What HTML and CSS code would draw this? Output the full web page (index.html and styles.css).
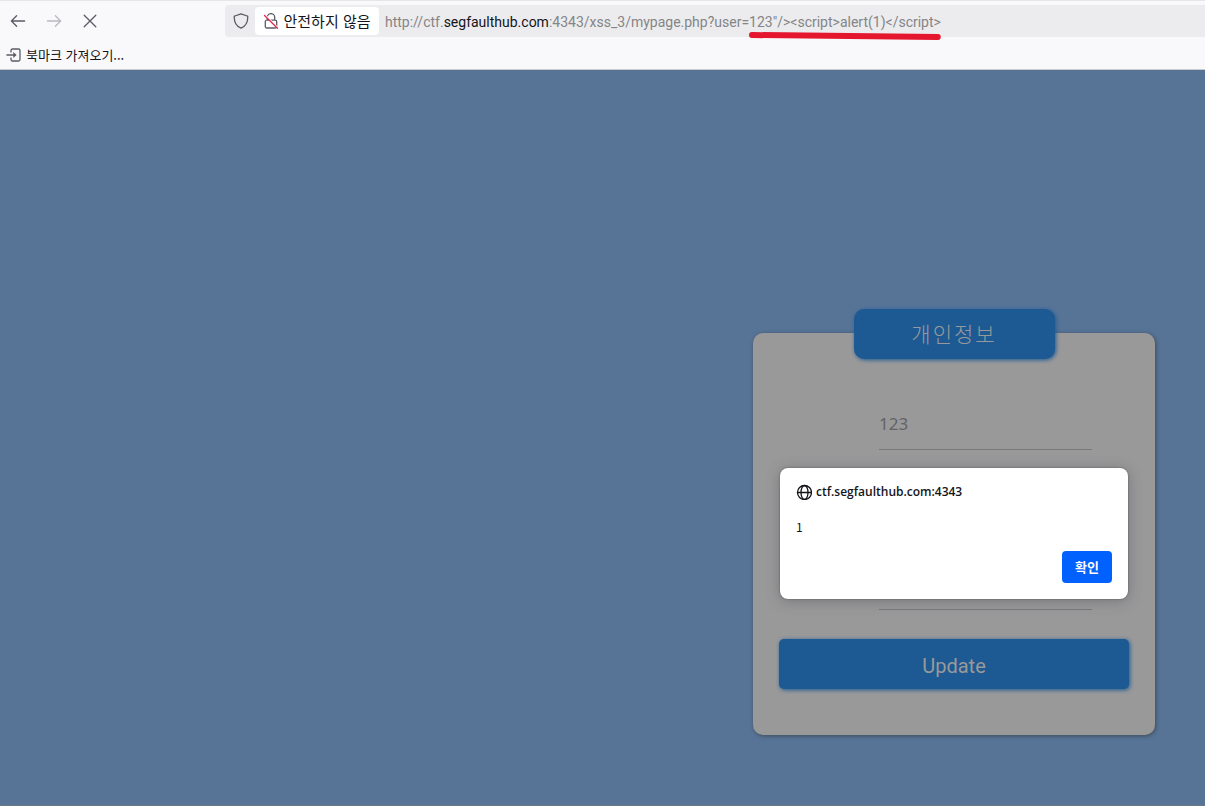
FILE: index.html
```html
<!DOCTYPE html>
<html lang="ko">
<head>
<meta charset="utf-8">
<meta name="viewport" content="width=device-width, initial-scale=1">
<title>개인정보</title>
<link rel="stylesheet" href="styles.css">
</head>
<body>
<header class="browser">
  <div class="toolbar">
    <nav class="nav-buttons">
      <button class="icon-button" type="button" aria-label="뒤로">
        <svg width="16" height="16" viewBox="0 0 16 16"><path d="M14.600 8H1.400M6.600 2.800 1.400 8l5.200 5.200"/></svg>
      </button>
      <button class="icon-button is-disabled" type="button" aria-label="앞으로" disabled>
        <svg width="16" height="16" viewBox="0 0 16 16"><path d="M1.400 8h13.200M9.400 2.800 14.600 8l-5.200 5.200"/></svg>
      </button>
      <button class="icon-button" type="button" aria-label="중지">
        <svg width="16" height="16" viewBox="0 0 16 16"><path d="m2.200 2.200 11.600 11.600M13.800 2.200 2.200 13.800"/></svg>
      </button>
    </nav>
    <div class="address-bar">
      <button class="shield-button" type="button" aria-label="보호">
        <svg width="16" height="16" viewBox="0 0 16 16"><path d="M8 .8 14.200 3c.4.100.6.400.6.800 0 5.200-1.500 9.300-6.800 11.400C2.700 13.100 1.200 9 1.200 3.800c0-.4.200-.7.600-.8z"/></svg>
      </button>
      <button class="security-button" type="button">
        <svg width="16" height="16" viewBox="0 0 16 16"><path d="M4.300 7V4.300a3.700 3.700 0 0 1 7.400 0V7M3.800 7.200h8.400c.8 0 1.500.7 1.500 1.500v4.800c0 .8-.7 1.500-1.500 1.500H3.800c-.8 0-1.500-.7-1.500-1.500V8.700c0-.8.7-1.500 1.500-1.500z"/><path class="slash-gap" d="m2 1.800 13 13"/><path class="slash" d="m1.500 2.500 13 12.700"/></svg>
        <span>안전하지 않음</span>
      </button>
      <div class="url" role="textbox" aria-label="주소" tabindex="0">http://ctf.<span class="url-domain">segfaulthub.com</span>:4343/xss_3/mypage.php?user=<span class="url-marked">123"/&gt;&lt;script&gt;alert(1)&lt;/script&gt;<svg class="marker" viewBox="0 0 198 8" preserveAspectRatio="none"><path d="M3 3 195 5"/></svg></span></div>
    </div>
  </div>
  <div class="bookmarks">
    <button class="bookmark" type="button">
      <svg width="16" height="16" viewBox="0 0 16 16"><path d="M5 5V3.500C5 2.600 5.600 2 6.500 2h6c.9 0 1.500.6 1.500 1.500v9c0 .9-.6 1.500-1.500 1.500h-6c-.9 0-1.500-.6-1.500-1.500V11M.9 8H9"/><path class="solid" d="m7.300 5 3.300 3-3.300 3z"/></svg>
      <span>북마크 가져오기...</span>
    </button>
  </div>
</header>
<main class="page">
  <section class="profile">
    <h1 class="profile-title">개인정보</h1>
    <form class="profile-form">
      <div class="fields">
        <input class="field" type="text" placeholder="123" aria-label="사용자">
        <input class="field" type="text" aria-label="정보">
        <input class="field" type="password" aria-label="비밀번호">
      </div>
      <button class="update" type="button">Update</button>
    </form>
    <div class="dialog" role="alertdialog" aria-labelledby="dialog-origin" aria-describedby="dialog-message">
      <h2 class="dialog-origin" id="dialog-origin">
        <svg width="16" height="16" viewBox="0 0 16 16"><circle cx="8.500" cy="8.500" r="7"/><ellipse cx="8.500" cy="8.500" rx="3.500" ry="7"/><path d="M1.500 8.500h14"/></svg>
        <span>ctf.segfaulthub.com:4343</span>
      </h2>
      <p class="dialog-message" id="dialog-message">1</p>
      <button class="confirm" type="button">확인</button>
    </div>
  </section>
</main>
</body>
</html>
```

FILE: styles.css
```css
* {
  box-sizing: border-box;
}

body {
  margin: 0;
  min-height: 100vh;
  display: flex;
  flex-direction: column;
  font-family: "Noto Sans", "Noto Sans CJK KR", sans-serif;
  color: #15141a;
}

button {
  margin: 0;
  padding: 0;
  border: 0;
  background: none;
  font: inherit;
  color: inherit;
}

svg {
  flex: none;
  fill: none;
  stroke: #5b5b66;
  stroke-width: 1.3;
  stroke-linecap: round;
  stroke-linejoin: round;
}

.browser {
  background: #f9f9fb;
  border-top: 1px solid #e6e6e9;
  border-bottom: 1px solid #cccccf;
}

.toolbar {
  display: flex;
  align-items: center;
  height: 40px;
  padding-left: 8px;
}

.nav-buttons {
  display: flex;
  gap: 16px;
  width: 217px;
  flex: none;
}

.icon-button {
  display: flex;
  padding: 2px;
}

.is-disabled {
  opacity: 0.4;
}

.address-bar {
  display: flex;
  align-items: center;
  flex: 1;
  min-width: 0;
  height: 32px;
  background: #ececee;
  border-radius: 4px 0 0 4px;
}

.shield-button {
  display: flex;
  padding: 0 6px 0 8px;
}

.security-button {
  display: flex;
  align-items: center;
  justify-content: center;
  gap: 4px;
  flex: none;
  width: 124px;
  height: 28px;
  background: #fff;
  border-radius: 4px;
  font-family: "Noto Sans CJK KR", sans-serif;
  font-size: 15px;
  line-height: 20px;
  white-space: nowrap;
}

.slash-gap {
  stroke: #fff;
}

.slash {
  stroke: #e22850;
}

.url {
  padding: 2px 0 0 6px;
  font-family: Roboto, "Noto Sans", sans-serif;
  font-size: 14px;
  line-height: 20px;
  color: #858587;
  white-space: nowrap;
}

.url-domain {
  color: #15141a;
}

.url-marked {
  position: relative;
}

.marker {
  position: absolute;
  left: 0;
  bottom: -10px;
  width: 100%;
  height: 8px;
  stroke: #e5172f;
  stroke-width: 6;
}

.bookmarks {
  height: 28px;
  padding-left: 6px;
  display: flex;
  align-items: center;
}

.bookmark {
  display: flex;
  align-items: center;
  gap: 4px;
  font-family: "Noto Sans CJK KR", sans-serif;
  font-size: 13px;
  line-height: 16px;
}

.bookmark .solid {
  fill: #5b5b66;
  stroke: none;
}

.page {
  flex: 1;
  display: flex;
  justify-content: flex-end;
  align-items: flex-start;
  padding: 263px 50px 70px;
  background: #577497;
  border-bottom: 1px solid #6a7888;
}

.profile {
  position: relative;
  width: 402px;
  padding: 0 26px 46px;
  background: #99999a;
  border-radius: 10px;
  box-shadow: 1px 1px 4px #3f4a56;
}

.profile-title {
  width: 201px;
  height: 50px;
  margin: -24px auto 0;
  background: #1d5993;
  border-radius: 10px;
  box-shadow: 1px 1px 4px #1d5993;
  color: #99999a;
  font-family: "Noto Sans CJK KR", sans-serif;
  font-size: 21px;
  font-weight: 300;
  letter-spacing: 2px;
  line-height: 48px;
  text-align: center;
}

.fields {
  display: grid;
  gap: 30px;
  width: 213px;
  margin: 41px 37px 29px auto;
}

.field {
  width: 100%;
  height: 50px;
  padding: 0 0 3px;
  border: 0;
  border-bottom: 1px solid #79797c;
  background: transparent;
  font-family: "Noto Sans", sans-serif;
  font-size: 17px;
  color: #636366;
}

.field::placeholder {
  color: #636366;
  opacity: 1;
}

.update {
  display: block;
  width: 100%;
  height: 50px;
  padding-top: 4px;
  background: #1d5993;
  border-radius: 5px;
  box-shadow: 1px 1px 4px #1d5993;
  color: #99999a;
  font-family: Roboto, "Noto Sans", sans-serif;
  font-size: 20px;
}

.dialog {
  position: absolute;
  top: 135px;
  left: 27px;
  right: 27px;
  display: flex;
  flex-direction: column;
  padding: 16px;
  background: #fff;
  border-radius: 8px;
  box-shadow: 0 2px 14px rgba(58, 57, 68, 0.35), 0 0 2px rgba(0, 0, 0, 0.4);
  font-family: "Noto Sans CJK KR", sans-serif;
  font-size: 13px;
  line-height: 16px;
}

.dialog-origin {
  display: flex;
  align-items: center;
  gap: 4px;
  margin: 0 0 19px;
  font-family: "Open Sans", sans-serif;
  font-size: 12px;
  font-weight: 600;
}

.dialog-origin svg {
  stroke: #15141a;
}

.dialog-message {
  margin: 0 0 16px;
  font-size: 12px;
}

.confirm {
  align-self: flex-end;
  width: 50px;
  height: 32px;
  background: #0061ff;
  border-radius: 4px;
  color: #fff;
  font-weight: 700;
}
```
